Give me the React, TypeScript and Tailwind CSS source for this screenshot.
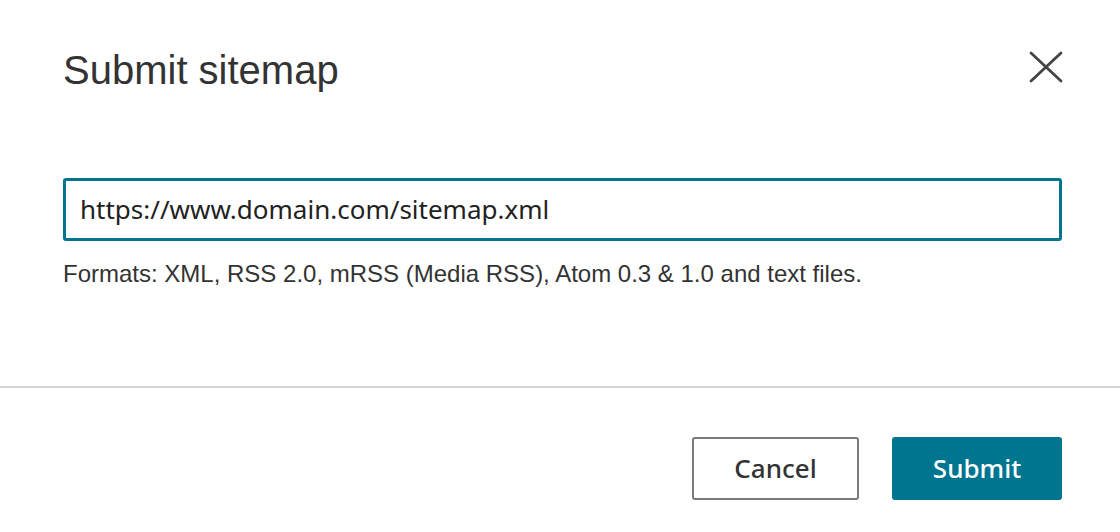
import React from "react";

export default function App() {
  return (
    <div className="w-[1120px] h-[532px] bg-white flex flex-col overflow-hidden">
      <div className="flex items-start justify-between pl-[63px] pr-[58px] pt-[46px] h-[94px]">
        <h1 className="text-[40px] leading-[48px] text-[#333333] font-['Liberation_Sans',Arial,sans-serif]">
          Submit sitemap
        </h1>
        <button className="w-[34px] h-[34px] flex items-center justify-center mt-[4px] -mr-[1px]" aria-label="Close">
          <svg width="34" height="34" viewBox="0 0 34 34" fill="none" stroke="#444444" strokeWidth="2.8" strokeLinecap="round">
            <path d="M2 3 L32 31 M32 3 L2 31" />
          </svg>
        </button>
      </div>
      <div className="pl-[63px] pr-[58px] pt-[84px]">
        <div className="h-[63px] border-[3px] border-[#00758f] rounded-[3px] flex items-center px-[14px]">
          <input
            defaultValue="https://www.domain.com/sitemap.xml"
            className="w-full outline-none text-[26px] text-[#222222] font-['Noto_Sans','Open_Sans',sans-serif] bg-transparent"
          />
        </div>
        <p className="mt-[19px] text-[24px] leading-[28px] text-[#333333] font-['Liberation_Sans',Arial,sans-serif]">
          Formats: XML, RSS 2.0, mRSS (Media RSS), Atom 0.3 &amp; 1.0 and text files.
        </p>
      </div>
      <div className="mt-[98px] border-t-[2px] border-[#d6d6d6]" />
      <div className="flex justify-end gap-[33px] pr-[58px] pt-[49px]">
        <button className="w-[167px] h-[63px] border-2 border-[#7a7a7a] rounded-[3px] bg-white text-[26px] text-[#333333] font-medium font-['Noto_Sans','Open_Sans',sans-serif]">
          Cancel
        </button>
        <button className="w-[170px] h-[63px] rounded-[3px] bg-[#00758f] text-[26px] text-white font-medium font-['Noto_Sans','Open_Sans',sans-serif]">
          Submit
        </button>
      </div>
    </div>
  );
}
